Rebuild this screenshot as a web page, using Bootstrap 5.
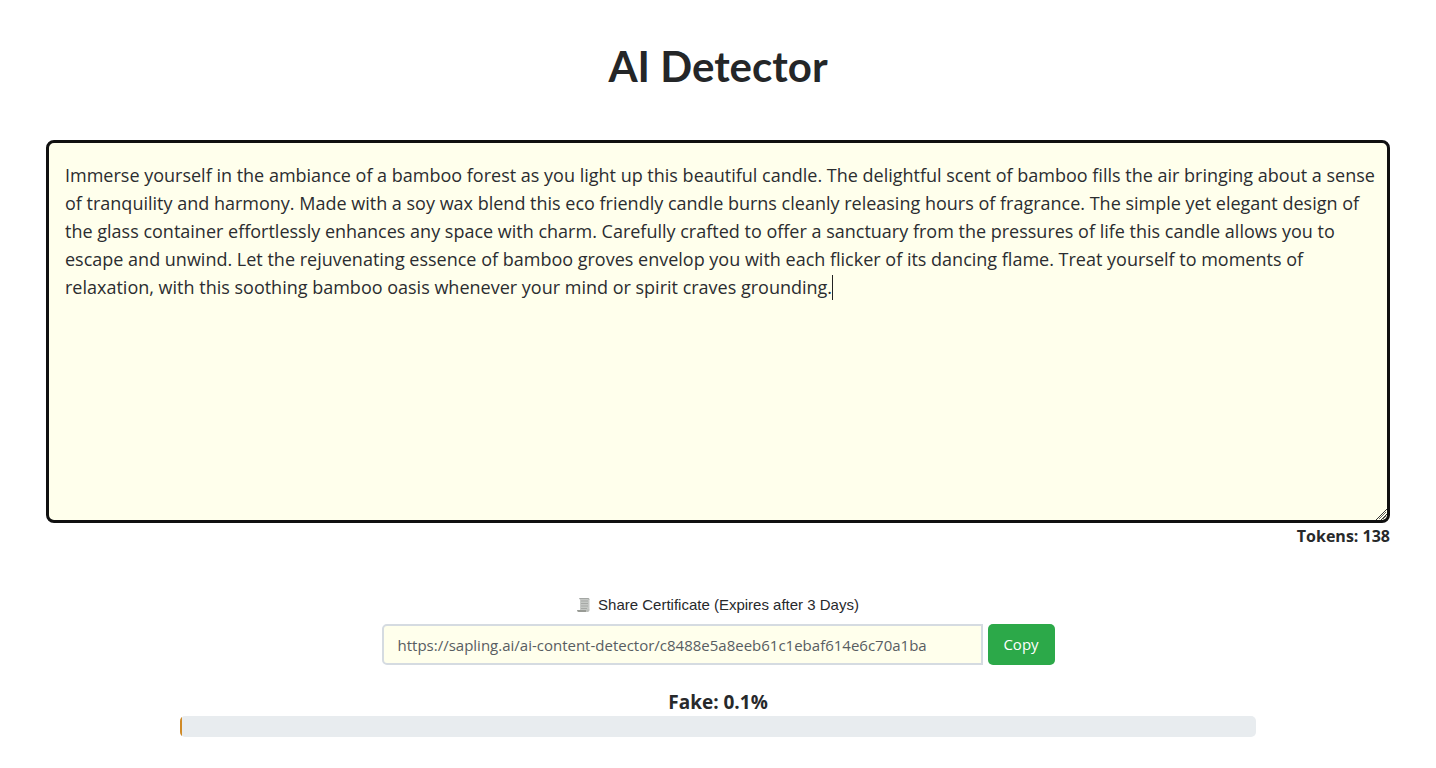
<!DOCTYPE html>
<html lang="en">
<head>
<meta charset="utf-8">
<meta name="viewport" content="width=device-width, initial-scale=1">
<title>AI Detector</title>
<link href="https://cdn.jsdelivr.net/npm/bootstrap@5.3.0/dist/css/bootstrap.min.css" rel="stylesheet">
<style>
body { font-family: "Open Sans", "Noto Sans", sans-serif; color: #27292b; background: #fff; }
.page-shell { padding: 40px 46px 24px; }
.page-title { font-family: Lato, sans-serif; font-weight: 700; font-size: 42px; line-height: 52px; color: #242628; }
.detector-text, .detector-text:focus {
  display: block; height: 383px; padding: 18px 10px 18px 16px; border: 3px solid #101010; border-radius: 8px;
  background: #ffffec; color: #2b2d30; font-size: 18px; line-height: 28px; box-shadow: none; resize: vertical;
  caret-color: transparent;
}
.text-caret { position: absolute; left: 786px; top: 135px; width: 1px; height: 25px; background: #222; pointer-events: none; }
.resize-grip { position: absolute; right: 3px; bottom: 3px; pointer-events: none; }
.token-count { font-size: 16px; line-height: 26px; font-weight: 700; }
.share-block { margin-top: 44px; }
.share-label { font-family: "Liberation Sans", Arial, sans-serif; font-size: 15px; line-height: 24px; margin-bottom: 7px; }
.share-row { max-width: 673px; gap: 5px; }
.share-link { height: 41px; padding: 0 14px; border: 2px solid #d5dbe1; border-radius: 5px 0 0 5px; background: #ffffec; color: #585d62; font-size: 15px; }
.copy-btn { width: 67px; height: 41px; flex: none; padding: 0; border: 0; border-radius: 5px; background: #2ca949; font-size: 15px; }
.score-label { font-size: 19px; line-height: 28px; font-weight: 700; }
.score-wrap { width: 80%; margin-top: 23px; }
.score-bar { height: 21px; border-radius: 5px; background: #e8ecef; }
.score-bar .progress-bar { min-width: 2px; background: #d08a26; }
</style>
</head>
<body>
<main class="page-shell">
  <h1 class="page-title text-center mb-0">AI Detector</h1>
  <div class="mt-5 position-relative">
    <textarea class="form-control detector-text" id="detectorText" aria-label="Text to check" spellcheck="false">Immerse yourself in the ambiance of a bamboo forest as you light up this beautiful candle. The delightful scent of bamboo fills the air bringing about a sense of tranquility and harmony. Made with a soy wax blend this eco friendly candle burns cleanly releasing hours of fragrance. The simple yet elegant design of the glass container effortlessly enhances any space with charm. Carefully crafted to offer a sanctuary from the pressures of life this candle allows you to escape and unwind. Let the rejuvenating essence of bamboo groves envelop you with each flicker of its dancing flame. Treat yourself to moments of relaxation, with this soothing bamboo oasis whenever your mind or spirit craves grounding.</textarea>
    <span class="text-caret" aria-hidden="true"></span>
    <svg class="resize-grip" width="11" height="12" viewBox="0 0 11 12" aria-hidden="true">
      <path d="M0 12L11 1M5 12L11 6" fill="none" stroke="#333"/>
    </svg>
  </div>
  <div class="token-count text-end">Tokens: 138</div>
  <div class="share-block d-flex flex-column align-items-center">
    <label class="share-label d-flex align-items-center gap-2" for="shareLink">
      <svg width="13" height="16" viewBox="0 0 13 16" aria-hidden="true">
        <path d="M2 1H11Q12.500 1 12.500 3V13.500H3V3Z" fill="#c5c8c5"/>
        <path d="M2 1H11Q12.500 1 12.500 3L11 2H3Z" fill="#a3a6a3"/>
        <path d="M4 4H11M4 6.500H11M4 9H11M4 11.500H10" stroke="#a6a9a6"/>
        <path d="M0 13H9.500V15H1.500Q0 15 0 13Z" fill="#989b95"/>
        <path d="M9.500 15V12.500H12.500Q12.500 15 10.500 15Z" fill="#bbbeba"/>
      </svg>
      Share Certificate (Expires after 3 Days)
    </label>
    <div class="share-row d-flex w-100">
      <input class="form-control share-link" id="shareLink" type="text" readonly value="https://sapling.ai/ai-content-detector/c8488e5a8eeb61c1ebaf614e6c70a1ba">
      <button class="btn btn-success copy-btn" type="button">Copy</button>
    </div>
  </div>
  <div class="score-wrap mx-auto">
    <div class="score-label text-center">Fake: 0.1%</div>
    <div class="progress score-bar" role="progressbar" aria-label="Fake score" aria-valuenow="0.1" aria-valuemin="0" aria-valuemax="100">
      <div class="progress-bar" style="width: 0.1%"></div>
    </div>
  </div>
</main>
<script src="https://cdn.jsdelivr.net/npm/bootstrap@5.3.0/dist/js/bootstrap.bundle.min.js"></script>
</body>
</html>
